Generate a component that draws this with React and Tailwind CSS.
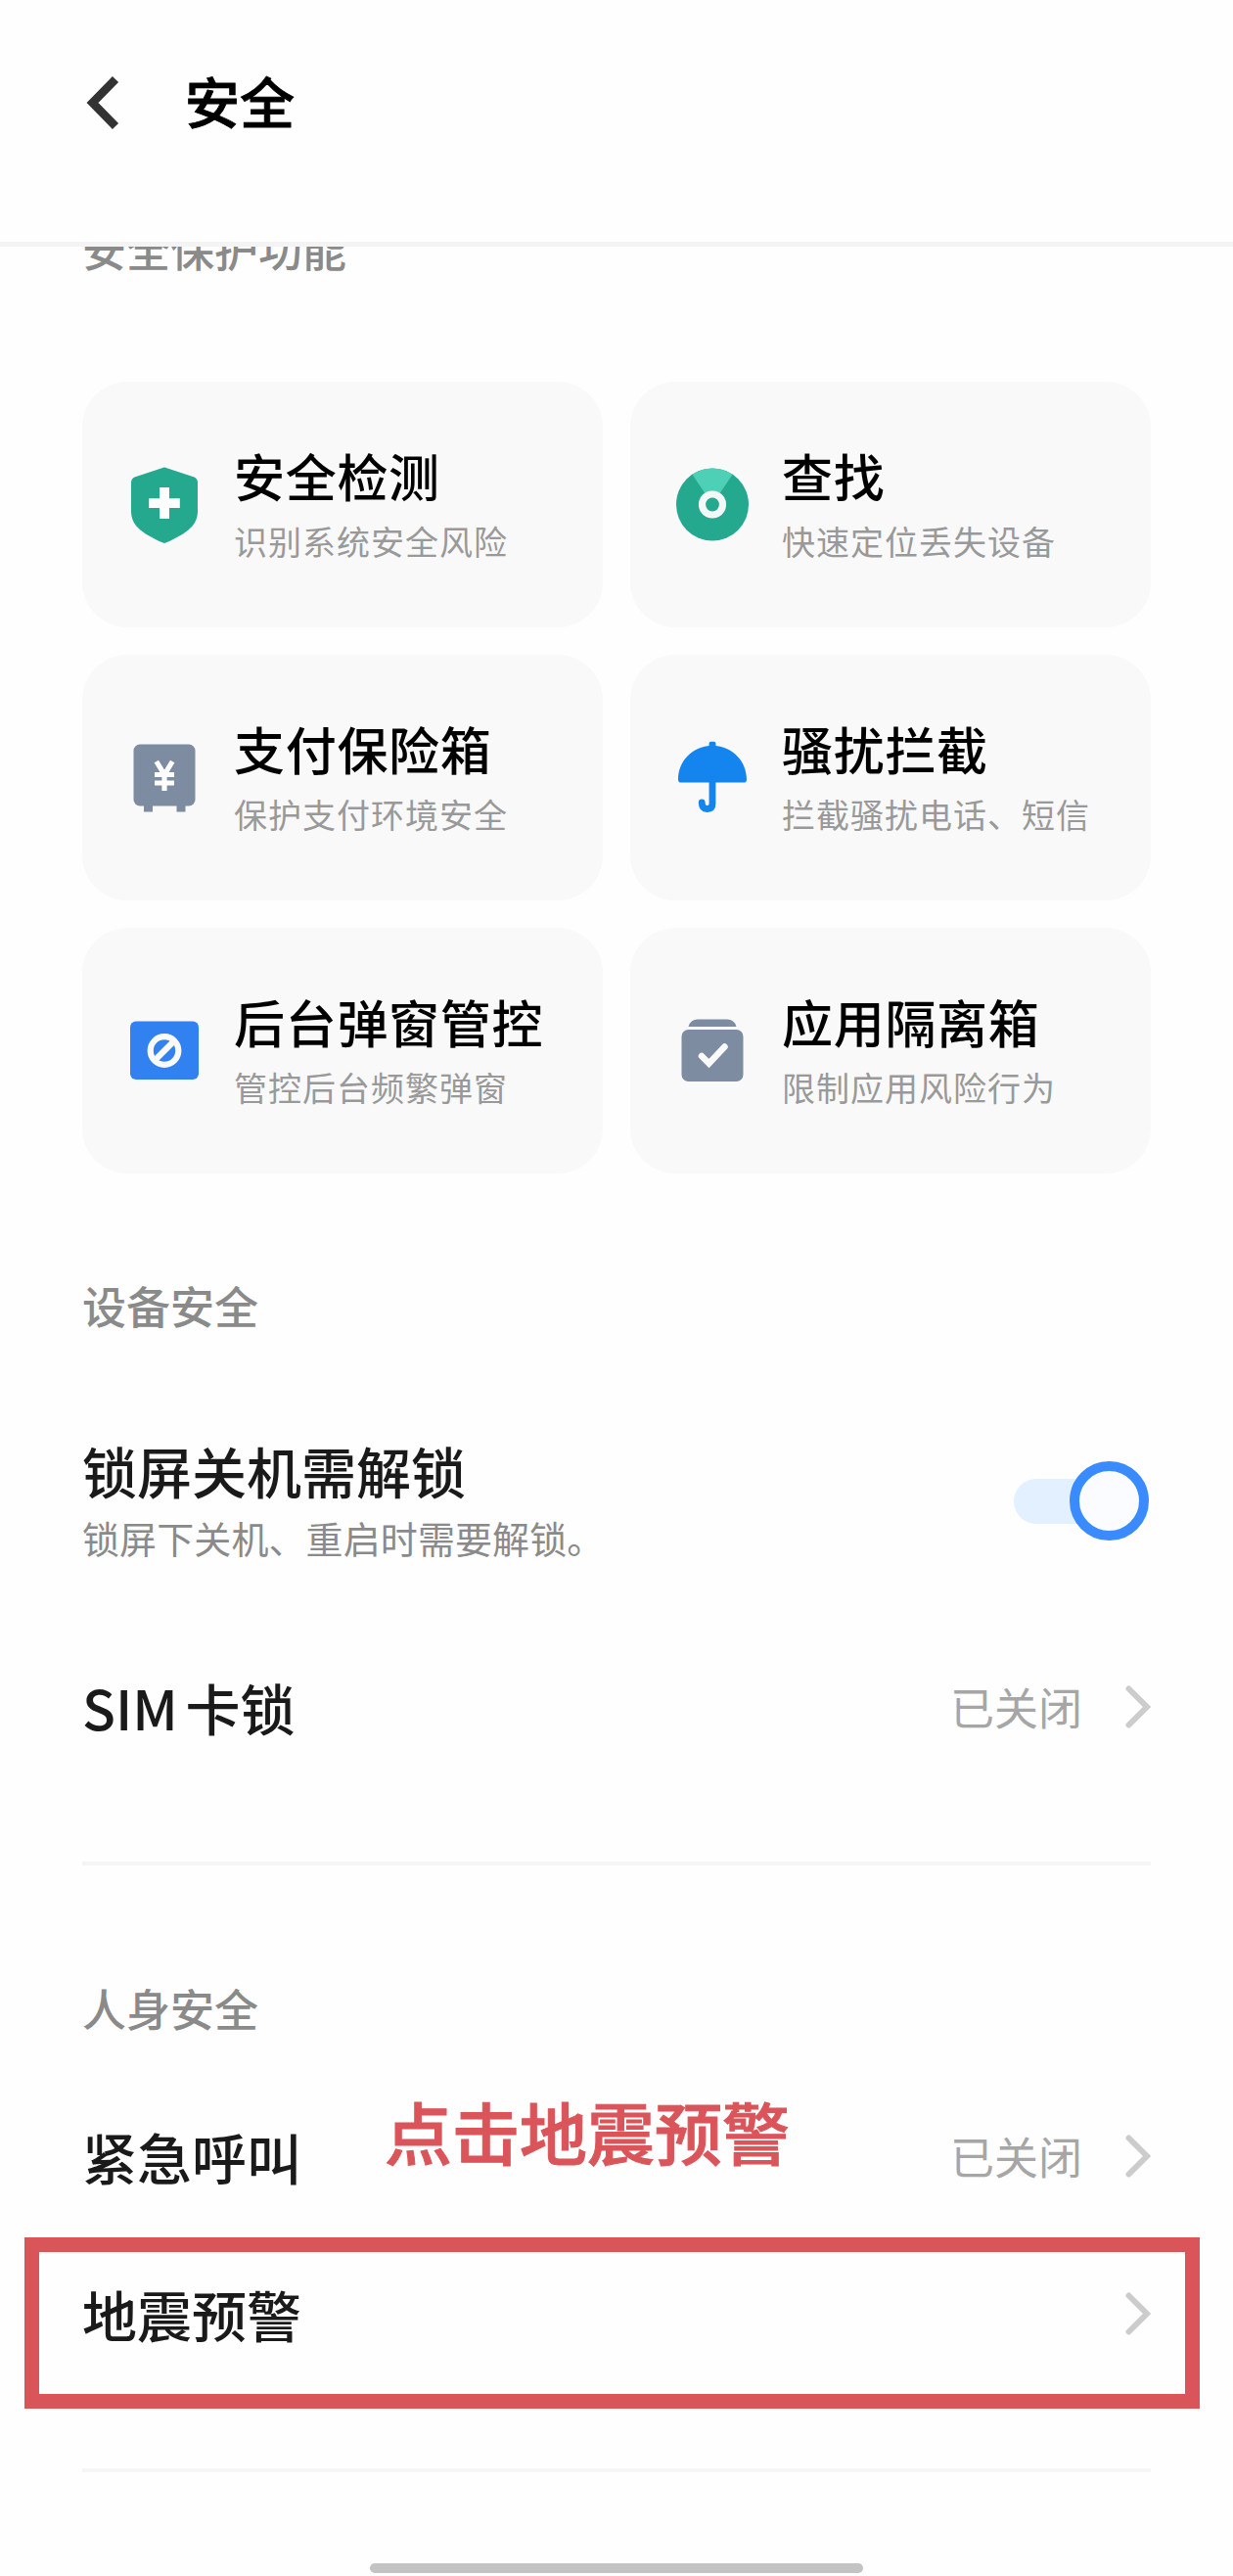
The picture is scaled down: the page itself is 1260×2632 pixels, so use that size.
function ShieldIcon() {
  return (
    <svg width="84" height="84" viewBox="0 0 84 84">
      <path
        d="M39.5 4.2Q42 2.8 44.5 4.2L72.5 13.5Q76 15 76 19V48C76 62 67 70 43.5 80.6Q42 81.2 40.5 80.6C17 70 8 62 8 48V19Q8 15 11.5 13.5Z"
        fill="#24a98f"
      />
      <path d="M37 24h10v11.3h10.8v9.6H47V56H37V44.900H26.200V35.300H37Z" fill="#fff" />
    </svg>
  )
}

function FindIcon() {
  return (
    <svg width="84" height="84" viewBox="0 0 84 84">
      <circle cx="42" cy="41.500" r="37" fill="#24a98f" />
      <path d="M42 41.500L21.500 10.700A37 37 0 0 1 62.500 10.700Z" fill="#4dd0b5" />
      <circle cx="42" cy="41.500" r="10.500" fill="#24a98f" stroke="#f3f8f7" strokeWidth="7.200" />
    </svg>
  )
}

function SafeIcon() {
  return (
    <svg width="84" height="84" viewBox="0 0 84 84">
      <path d="M21 66h9v10.500h-9zM54.500 66h9v10.500h-9z" fill="#7d8ca0" />
      <rect x="10.500" y="7.500" width="63" height="63" rx="6.500" fill="#7d8ca0" />
      <path
        d="M33.800 25L42 38.500L50.200 25M32 38.500H52M32 47H52M42 37V55"
        stroke="#fff"
        strokeWidth="5.200"
        fill="none"
      />
    </svg>
  )
}

function UmbrellaIcon() {
  return (
    <svg width="84" height="84" viewBox="0 0 84 84">
      <path
        d="M38.600 9V6.500Q38.600 4.800 40.300 4.800H43.700Q45.400 4.800 45.400 6.500V9C63 10.500 77 25 77 43.500Q77 46.600 74 46.600H10Q7 46.600 7 43.500C7 25 21 10.500 38.600 9Z"
        fill="#1484ee"
      />
      <path
        d="M42 44V68Q42 73.500 36.800 73.500Q31.200 73.500 31.200 67"
        stroke="#1484ee"
        strokeWidth="6.800"
        strokeLinecap="round"
        fill="none"
      />
    </svg>
  )
}

function PopupIcon() {
  return (
    <svg width="84" height="84" viewBox="0 0 84 84">
      <rect x="7" y="11.500" width="70" height="59.500" rx="6" fill="#3182f0" />
      <circle cx="42" cy="41.500" r="14.300" stroke="#fafafa" strokeWidth="6.200" fill="none" />
      <path d="M32.500 51L51.500 32" stroke="#fafafa" strokeWidth="6.200" />
    </svg>
  )
}

function SandboxIcon() {
  return (
    <svg width="84" height="84" viewBox="0 0 84 84">
      <path d="M17.500 17Q19.500 9.500 27 9.500H57Q64.500 9.500 66.500 17Z" fill="#7d8ca0" />
      <rect x="10.500" y="20" width="63" height="53" rx="7" fill="#7d8ca0" />
      <path
        d="M31 47L38.500 54.500L54.500 37.500"
        stroke="#fafafa"
        strokeWidth="6.500"
        strokeLinecap="round"
        fill="none"
      />
    </svg>
  )
}

const FEATURES = [
  { title: '安全检测', desc: '识别系统安全风险', Icon: ShieldIcon },
  { title: '查找', desc: '快速定位丢失设备', Icon: FindIcon },
  { title: '支付保险箱', desc: '保护支付环境安全', Icon: SafeIcon },
  { title: '骚扰拦截', desc: '拦截骚扰电话、短信', Icon: UmbrellaIcon },
  { title: '后台弹窗管控', desc: '管控后台频繁弹窗', Icon: PopupIcon },
  { title: '应用隔离箱', desc: '限制应用风险行为', Icon: SandboxIcon },
]

function FeatureCard({ title, desc, Icon }) {
  return (
    <div className="flex h-[251px] items-center rounded-[46px] bg-[#f9f9f9] pl-[42px]">
      <Icon />
      <div className="ml-[29px]">
        <div className="h-[60px] text-[52px] font-medium leading-[60px] tracking-[0.7px] text-black">{title}</div>
        <div className="mt-[15px] h-[44px] text-[34px] leading-[44px] tracking-[1px] text-[#999]">{desc}</div>
      </div>
    </div>
  )
}

function SectionTitle({ className, children }) {
  return (
    <h2 className={`h-12 text-[45px] font-medium leading-[48px] text-[#8a8a8a] ${className}`}>{children}</h2>
  )
}

function Chevron() {
  return (
    <svg width="26" height="44" viewBox="0 0 26 44">
      <path d="M3.500 3.500L22 22L3.500 40.500" stroke="#ccc" strokeWidth="6" strokeLinecap="round" fill="none" />
    </svg>
  )
}

function Row({ label, value, className, children }) {
  return (
    <div className={`relative flex h-[60px] items-center justify-between ${className}`}>
      <span className="text-[56px] font-medium leading-[60px] text-[#1a1a1a] [word-spacing:-5px]">{label}</span>
      <div className="flex items-center gap-[44px]">
        {value && <span className="text-[45px] leading-[60px] text-[#a6a6a6]">{value}</span>}
        <Chevron />
      </div>
      {children}
    </div>
  )
}

function Toggle() {
  return (
    <div className="relative flex h-[81px] w-[140px] items-center">
      <div className="h-[46px] w-[124px] rounded-full bg-[#e3f0ff]" />
      <div className="absolute right-[2px] top-0 size-[81px] rounded-full border-[10.5px] border-[#3a8bff] bg-[#fbfcff]" />
    </div>
  )
}

export default function App() {
  return (
    <div className="h-[2632px] w-[1260px] overflow-hidden bg-[#fefefe] font-['Noto_Sans_CJK_SC',sans-serif]">
      {/* Header */}
      <header className="flex h-[252px] items-start border-b-[5px] border-[#f4f4f4] pl-[88px] pt-[72px]">
        <svg width="36" height="66" viewBox="0 0 36 66">
          <path d="M30 9L6.500 33L30 57" stroke="#333" strokeWidth="8.500" strokeLinejoin="miter" fill="none" />
        </svg>
        <h1 className="ml-[65px] h-[60px] text-[56px] font-medium leading-[60px] text-black [-webkit-text-stroke:0.8px_black]">
          安全
        </h1>
      </header>

      <main className="overflow-hidden px-[84px]">
        {/* Scrolled partly under the header */}
        <SectionTitle className="-mt-[22px]">安全保护功能</SectionTitle>
        <div className="mt-[112px] grid grid-cols-2 gap-[28px]">
          {FEATURES.map((f) => (
            <FeatureCard key={f.title} {...f} />
          ))}
        </div>

        {/* Device security */}
        <SectionTitle className="mt-[111px]">设备安全</SectionTitle>
        <div className="mt-[114px] flex items-center justify-between">
          <div>
            <div className="h-[60px] text-[56px] font-medium leading-[60px] text-[#1a1a1a]">锁屏关机需解锁</div>
            <div className="mt-[15px] h-12 text-[38px] leading-[48px] tracking-[0.1px] text-[#8a8a8a]">
              锁屏下关机、重启时需要解锁。
            </div>
          </div>
          <Toggle />
        </div>
        <Row className="mt-[119px]" label="SIM 卡锁" value="已关闭" />
        <div className="mt-[128px] h-1 bg-[#f5f5f5]" />

        {/* Personal safety */}
        <SectionTitle className="mt-[122px]">人身安全</SectionTitle>
        <Row className="mt-[97px]" label="紧急呼叫" value="已关闭">
          <span className="absolute left-[309px] top-[-36px] whitespace-nowrap text-[69px] font-medium leading-[80px] text-[#da555a] [-webkit-text-stroke:1px_#da555a]">
            点击地震预警
          </span>
        </Row>
        <Row className="mt-[101px]" label="地震预警">
          <div className="absolute -left-[59px] -right-[50px] top-[-48px] h-[175px] border-[15.5px] border-[#da555a]" />
        </Row>
        <div className="mt-[128px] h-1 bg-[#f5f5f5]" />
      </main>

      {/* Home indicator */}
      <div className="mx-auto mt-[93px] h-[10px] w-[504px] rounded-full bg-[#c3c3c3]" />
    </div>
  )
}
